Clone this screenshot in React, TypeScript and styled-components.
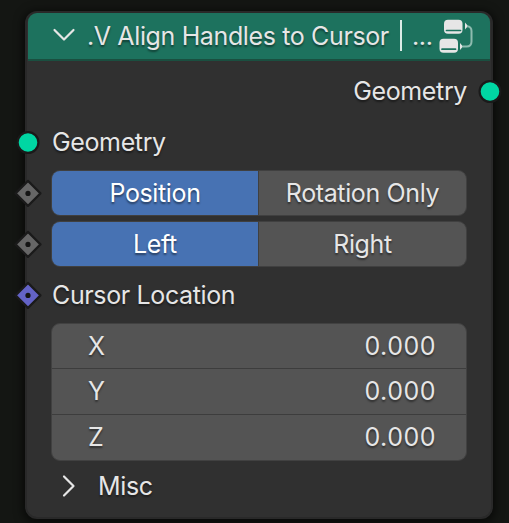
import React from "react";
import styled, { createGlobalStyle } from "styled-components";

const GlobalStyle = createGlobalStyle`
  * { box-sizing: border-box; }
  body {
    margin: 0;
    background: #141613;
    overflow: hidden;
    font-family: Inter, "Liberation Sans", sans-serif;
    font-size: 25px;
    letter-spacing: -0.37px;
    color: #e6e6e6;
  }
`;

const Canvas = styled.main`
  width: 509px;
  height: 523px;
  padding: 11px 16px 0 25px;
`;

const Node = styled.section`
  width: 468px;
  height: 508px;
  border: 2px solid #292929;
  border-radius: 12px;
  background: #303030;
  box-shadow: 0 2px 10px 2px rgba(0, 0, 0, 0.6);
  text-shadow: 0 1.5px 2px rgba(0, 0, 0, 0.45);
  line-height: 32px;
  white-space: nowrap;
`;

const Header = styled.header`
  display: flex;
  align-items: center;
  height: 48px;
  margin: 0 1px;
  padding: 0 17px 0 23px;
  border-radius: 9px 9px 0 0;
  border-bottom: 2px solid #1a4f40;
  background: #1d725e;
`;

const Chevron = styled.svg`
  flex: none;
  width: 26px;
  height: 26px;
  overflow: visible;
  fill: none;
  stroke: #e6e6e6;
  stroke-width: 2.2;
  stroke-linecap: round;
  stroke-linejoin: round;
`;

const Title = styled.h1`
  display: flex;
  flex: 1;
  margin: 0 0 0 10px;
  font-size: inherit;
  font-weight: 400;
`;

const Label = styled.span<{ $width: number }>`
  display: block;
  width: ${(p) => p.$width}px;
`;

const Separator = styled.i`
  width: 2px;
  height: 31px;
  margin: 0 10px;
  background: #dcebe6;
`;

const GroupIcon = styled.svg`
  flex: none;
  width: 34px;
  height: 34px;
`;

const Body = styled.div`
  padding: 4px 24px 0 25px;
`;

const Row = styled.div<{ $end?: boolean }>`
  position: relative;
  display: flex;
  align-items: center;
  justify-content: ${(p) => (p.$end ? "flex-end" : "flex-start")};
  height: 51px;
`;

const Socket = styled.svg<{ $side: "left" | "right" }>`
  position: absolute;
  top: 12px;
  ${(p) => (p.$side === "left" ? "left: -38px;" : "right: -37px;")}
  width: 28px;
  height: 28px;
  overflow: visible;
  stroke: #1a1a1a;
  stroke-width: 2.2;
  stroke-linejoin: round;
`;

const Choice = styled.div`
  display: grid;
  grid-template-columns: 206px 1fr;
  width: 416px;
  height: 46px;
  margin: 1px 0 0 -1px;
  border: 1px solid #404040;
  border-radius: 9px;
  background: #404040;
  overflow: hidden;
`;

const Option = styled.button<{ $active?: boolean }>`
  margin: 0 0 0 ${(p) => (p.$active ? "0" : "1px")};
  padding: 0;
  border: 0;
  font: inherit;
  letter-spacing: inherit;
  text-shadow: inherit;
  color: ${(p) => (p.$active ? "#ffffff" : "#e6e6e6")};
  background: ${(p) => (p.$active ? "#4772b3" : "#545454")};
`;

const Vector = styled.div`
  display: grid;
  grid-template-rows: 44px 46px 46px;
  width: 416px;
  height: 138px;
  margin: 3px 0 0 -1px;
  border: 1px solid #414141;
  border-radius: 9px;
  background: #545454;
`;

const Field = styled.div`
  display: flex;
  align-items: center;
  justify-content: space-between;
  padding: 0 30px 0 36px;
  & + & {
    border-top: 1px solid #3d3d3d;
    padding-bottom: 2px;
  }
`;

const Value = styled.span`
  letter-spacing: 0.5px;
`;

const Panel = styled.div`
  display: flex;
  align-items: center;
  gap: 16px;
  height: 50px;
  padding-left: 4px;
`;

type Kind = "geometry" | "menu" | "vector";

function Pin({ kind, side = "left" }: { kind: Kind; side?: "left" | "right" }) {
  return (
    <Socket $side={side} viewBox="0 0 28 28">
      {kind === "geometry" ? (
        <circle cx="14" cy="14.5" r="10.4" fill="#00d6a3" />
      ) : (
        <>
          <path d="M14 1.9 26.5 14.4 14 26.9 1.5 14.4Z" fill={kind === "menu" ? "#666666" : "#6363c7"} />
          <circle cx="14" cy="14.4" r="2.6" fill="#141414" stroke="none" />
        </>
      )}
    </Socket>
  );
}

function Toggle({ options }: { options: [string, string] }) {
  return (
    <Row>
      <Pin kind="menu" />
      <Choice>
        <Option $active>{options[0]}</Option>
        <Option>{options[1]}</Option>
      </Choice>
    </Row>
  );
}

export default function App() {
  return (
    <>
      <GlobalStyle />
      <Canvas>
        <Node>
          <Header>
            <Chevron viewBox="0 0 26 26">
              <path d="M3.5 7 13 16.5 22.5 7" />
            </Chevron>
            <Title>
              <Label $width={303}>.V Align Handles to Cursor</Label>
              <Separator />
              <span>...</span>
            </Title>
            <GroupIcon viewBox="0 0 34 34">
              <g fill="#e6e6e6">
                <rect x="5" y="0.7" width="18.5" height="14" rx="4" />
                <rect x="0.5" y="19.7" width="18.5" height="14" rx="4" />
                <path d="M26 3.5 29 7 26 10.5ZM21 24 24 27.5 21 31Z" />
              </g>
              <path d="M7.5 11.5H21.5M3 30.2H16.5" stroke="#1d725e" strokeWidth="1.7" strokeLinecap="round" />
              <path d="M28 7.2Q32.5 7.5 32.5 12V22.5Q32.5 27.5 27.5 27.5H23.5" fill="none" stroke="#8ebbaf" strokeWidth="2" />
            </GroupIcon>
          </Header>
          <Body>
            <Row $end>
              Geometry
              <Pin kind="geometry" side="right" />
            </Row>
            <Row>
              <Pin kind="geometry" />
              Geometry
            </Row>
            <Toggle options={["Position", "Rotation Only"]} />
            <Toggle options={["Left", "Right"]} />
            <Row>
              <Pin kind="vector" />
              Cursor Location
            </Row>
            <Vector>
              {["X", "Y", "Z"].map((axis) => (
                <Field key={axis}>
                  <span>{axis}</span>
                  <Value>0.000</Value>
                </Field>
              ))}
            </Vector>
            <Panel>
              <Chevron viewBox="0 0 26 26">
                <path d="M8 3.5 17.5 13 8 22.5" />
              </Chevron>
              Misc
            </Panel>
          </Body>
        </Node>
      </Canvas>
    </>
  );
}
